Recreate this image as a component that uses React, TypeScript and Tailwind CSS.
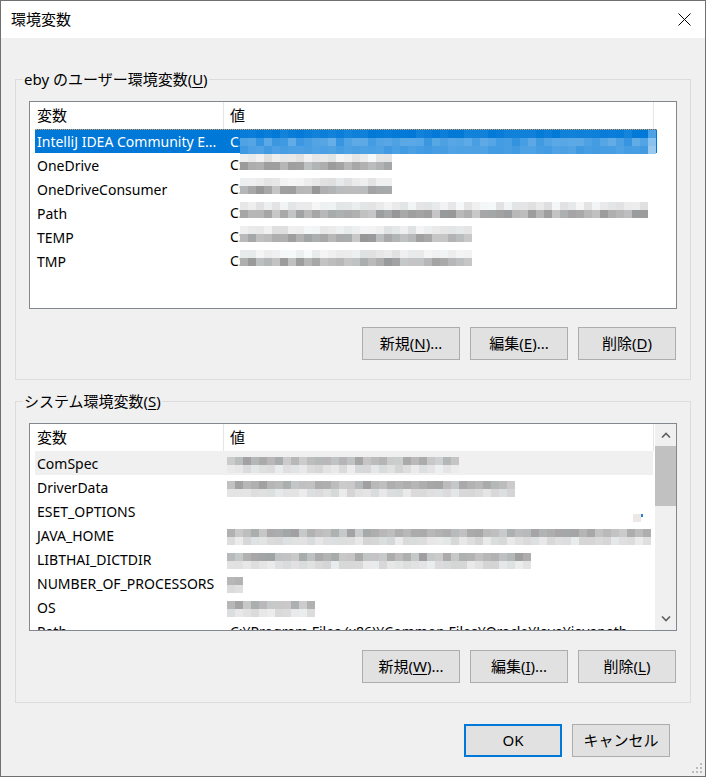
import React from 'react';

const FONT = "font-['Noto_Sans','Noto_Sans_CJK_JP',sans-serif]";

function rnd(n: number) {
  const x = Math.sin(n * 12.9898 + 78.233) * 43758.5453;
  return x - Math.floor(x);
}

function grayAt(v: number, seed: number) {
  const c = Math.round(v);
  const tint = rnd(seed * 3.1) > 0.7 ? 4 : 0;
  return `rgb(${c},${c + tint},${c + tint})`;
}

function blueAt(t: number) {
  return `rgb(${Math.round(t * 255)},${Math.round(120 + t * 135)},${Math.round(215 + t * 40)})`;
}

type Band = [number, number];

function Mosaic({ cells, seed, bands, blue = false }: { cells: number; seed: number; bands: Band[]; blue?: boolean }) {
  return (
    <div className="flex flex-col shrink-0">
      {bands.map(([lo, hi], r) => (
        <div key={r} className="flex h-[8px]">
          {Array.from({ length: cells }).map((_, i) => {
            const k = seed * 131 + r * 977 + i * 7;
            const v = lo + (hi - lo) * rnd(k);
            const color = blue ? blueAt(i === cells - 1 ? Math.min(v + 0.3, 0.7) : v) : grayAt(v, k);
            return <div key={i} className="w-[8px] h-[8px]" style={{ backgroundColor: color }} />;
          })}
        </div>
      ))}
    </div>
  );
}

function Btn({ label, mnemonic, tail = '', primary = false }: { label: string; mnemonic: string; tail?: string; primary?: boolean }) {
  return (
    <button
      className={`h-[33px] w-[98px] flex items-center justify-center bg-[#e1e1e1] text-[15px] text-black ${
        primary ? 'border-2 border-[#0078d7]' : 'border border-[#adadad]'
      }`}
    >
      {label}
      {mnemonic && (
        <>
          (<span className="underline underline-offset-2">{mnemonic}</span>){tail}
        </>
      )}
    </button>
  );
}

function Header() {
  return (
    <div className="flex h-[27px] pl-[5px] shrink-0 text-[15px]">
      <div className="w-[189px] h-full pl-[2px] flex items-center border-r border-[#e5e5e5]">変数</div>
      <div className="w-[430px] h-full pl-[6px] flex items-center border-r border-[#e5e5e5]">値</div>
    </div>
  );
}

const userVars = [
  { name: 'IntelliJ IDEA Community E...', cells: 52 },
  { name: 'OneDrive', cells: 19 },
  { name: 'OneDriveConsumer', cells: 19 },
  { name: 'Path', cells: 51 },
  { name: 'TEMP', cells: 29 },
  { name: 'TMP', cells: 29 },
];

const sysVars = [
  { name: 'ComSpec', cells: 29 },
  { name: 'DriverData', cells: 36 },
  { name: 'ESET_OPTIONS', cells: 0 },
  { name: 'JAVA_HOME', cells: 53 },
  { name: 'LIBTHAI_DICTDIR', cells: 38 },
  { name: 'NUMBER_OF_PROCESSORS', cells: 2 },
  { name: 'OS', cells: 11 },
];

function UserList() {
  return (
    <div className="ml-[13px] mt-[12px] w-[648px] h-[208px] border border-[#828790] bg-white flex flex-col overflow-hidden">
      <Header />
      <div className="pl-[5px] text-[14px]">
        {userVars.map((v, i) => {
          const sel = i === 0;
          return (
            <div
              key={v.name}
              className={`flex h-[24px] w-[622px] ${sel ? 'bg-[#0078d7] text-white border-t border-dotted border-[#e0a060]' : ''}`}
            >
              <div className="w-[189px] pl-[2px] flex items-center whitespace-nowrap overflow-hidden">{v.name}</div>
              <div className="pl-[6px] flex items-start">
                <span className="w-[10px] shrink-0 leading-[24px]">C:</span>
                <div className={sel ? 'mt-[0px]' : 'mt-[1px]'}>
                  {sel ? (
                    <Mosaic cells={v.cells} seed={i + 1} blue bands={[[0, 0.08], [0.2, 0.4], [0.25, 0.32]]} />
                  ) : (
                    <Mosaic cells={v.cells} seed={i + 1} bands={[[222, 246], [150, 200]]} />
                  )}
                </div>
              </div>
            </div>
          );
        })}
      </div>
    </div>
  );
}

function Chevron({ up }: { up: boolean }) {
  return (
    <svg width="10" height="6" viewBox="0 0 10 6">
      <polyline
        points={up ? '1,5.5 5,1.5 9,5.5' : '1,0.5 5,4.5 9,0.5'}
        fill="none"
        stroke="#606060"
        strokeWidth="1.6"
      />
    </svg>
  );
}

function SystemList() {
  return (
    <div className="ml-[13px] mt-[12px] w-[648px] h-[208px] border border-[#828790] bg-white flex overflow-hidden">
      <div className="w-[625px] flex flex-col overflow-hidden">
        <Header />
        <div className="pl-[5px] text-[14px]">
          {sysVars.map((v, i) => (
            <div key={v.name} className={`flex h-[24px] w-[618px] ${i === 0 ? 'bg-[#f0f0f0]' : ''}`}>
              <div className="w-[189px] pl-[2px] flex items-center whitespace-nowrap">{v.name}</div>
              <div className="pl-[3px] flex items-start flex-1">
                {v.cells > 0 ? (
                  <div className="mt-[6px]">
                    <Mosaic cells={v.cells} seed={i + 20} bands={[[158, 205], [212, 236]]} />
                  </div>
                ) : (
                  <div className="ml-auto mr-[10px] mt-[15px] flex">
                    <div className="w-[8px] h-[8px] bg-[#ede8e6]" />
                    <div className="w-[2px] h-[3px] bg-[#2f7fd0]" />
                  </div>
                )}
              </div>
            </div>
          ))}
          <div className="flex h-[24px] w-[618px]">
            <div className="w-[189px] pl-[2px] flex items-center">Path</div>
            <div className="pl-[6px] flex items-center whitespace-nowrap">C:¥Program Files (x86)¥Common Files¥Oracle¥Java¥javapath</div>
          </div>
        </div>
      </div>
      <div className="w-[21px] bg-[#f0f0f0] flex flex-col">
        <div className="h-[22px] flex items-center justify-center">
          <Chevron up />
        </div>
        <div className="flex-1 flex flex-col">
          <div className="h-[60px] bg-[#c1c1c1]" />
        </div>
        <div className="h-[22px] flex items-center justify-center">
          <Chevron up={false} />
        </div>
      </div>
    </div>
  );
}

export default function App() {
  return (
    <div className={`relative w-[706px] h-[777px] border border-[#707070] bg-[#f0f0f0] flex flex-col text-[15px] text-black ${FONT}`}>
      {/* title bar */}
      <div className="h-[37px] bg-white flex items-center justify-between pl-[10px] pr-[14px] shrink-0">
        <span>環境変数</span>
        <svg width="13" height="13" viewBox="0 0 13 13">
          <path d="M0.5 0.5 L12.5 12.5 M12.5 0.5 L0.5 12.5" stroke="#000" strokeWidth="1" />
        </svg>
      </div>

      <div className="px-[14px] flex flex-col">
        <fieldset className="mt-[31px] border border-[#dcdcdc] pb-[19px]">
          <legend className="ml-[7px] px-[1px] leading-[20px]">
            eby のユーザー環境変数(<span className="underline underline-offset-2">U</span>)
          </legend>
          <UserList />
          <div className="mt-[18px] flex justify-end gap-[10px] pr-[14px]">
            <Btn label="新規" mnemonic="N" tail="..." />
            <Btn label="編集" mnemonic="E" tail="..." />
            <Btn label="削除" mnemonic="D" />
          </div>
        </fieldset>

        <fieldset className="mt-[11px] border border-[#dcdcdc] pb-[19px]">
          <legend className="ml-[7px] px-[1px] leading-[20px]">
            システム環境変数(<span className="underline underline-offset-2">S</span>)
          </legend>
          <SystemList />
          <div className="mt-[19px] flex justify-end gap-[10px] pr-[14px]">
            <Btn label="新規" mnemonic="W" tail="..." />
            <Btn label="編集" mnemonic="I" tail="..." />
            <Btn label="削除" mnemonic="L" />
          </div>
        </fieldset>

        <div className="mt-[21px] flex justify-end gap-[10px] pr-[21px]">
          <Btn label="OK" mnemonic="" primary />
          <Btn label="キャンセル" mnemonic="" />
        </div>
      </div>

      {/* resize grip */}
      <svg className="absolute right-[2px] bottom-[2px]" width="11" height="11" viewBox="0 0 11 11">
        <rect x="8" y="0" width="2" height="2" fill="#bcbcbc" />
        <rect x="4" y="4" width="2" height="2" fill="#bcbcbc" />
        <rect x="8" y="4" width="2" height="2" fill="#bcbcbc" />
        <rect x="0" y="8" width="2" height="2" fill="#bcbcbc" />
        <rect x="4" y="8" width="2" height="2" fill="#bcbcbc" />
        <rect x="8" y="8" width="2" height="2" fill="#bcbcbc" />
      </svg>
    </div>
  );
}
